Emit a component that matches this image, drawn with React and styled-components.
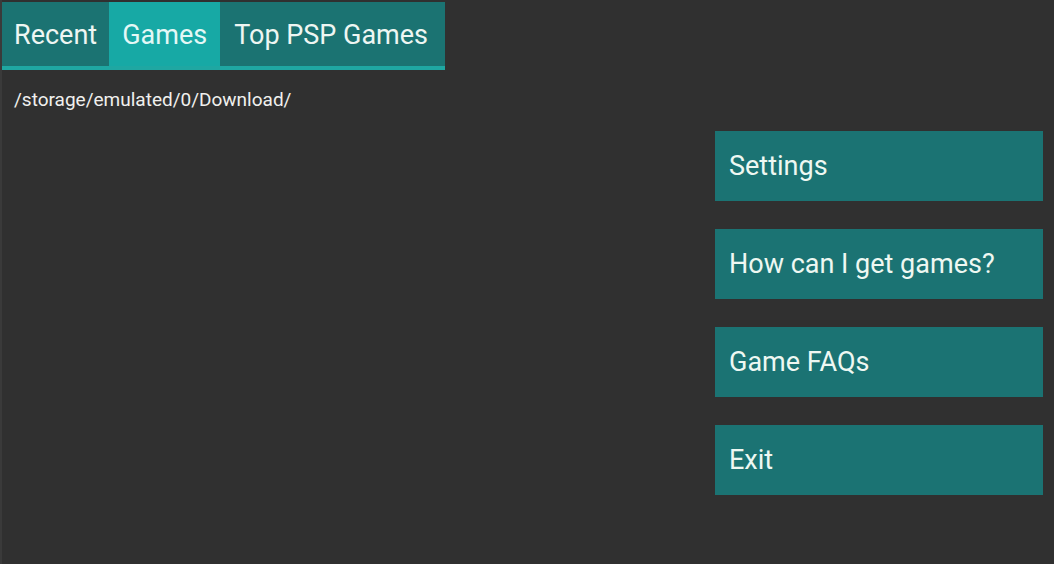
import React from 'react';
import styled, { createGlobalStyle } from 'styled-components';

const GlobalStyle = createGlobalStyle`
  html, body {
    margin: 0;
    padding: 0;
    background: #303030;
  }
  * { box-sizing: border-box; }
`;

const Screen = styled.div`
  width: 1054px;
  height: 564px;
  background: #303030;
  border-left: 2px solid #3a3a3a;
  font-family: Roboto, "Liberation Sans", sans-serif;
  color: #eef6f2;
  display: flex;
  flex-direction: column;
  overflow: hidden;
`;

const TabBar = styled.div`
  margin-top: 2px;
  width: 443px;
  height: 68px;
  display: flex;
  background: #1b7372;
  border-bottom: 4px solid #1fa7a2;
`;

const Tab = styled.div`
  display: flex;
  align-items: center;
  padding: 2px ${(p) => p.pad || 12}px 0;
  font-size: 27px;
  background: ${(p) => (p.active ? '#17a9a5' : 'transparent')};
  color: ${(p) => (p.active ? '#e4f8f6' : '#eef6f2')};
`;

const Body = styled.div`
  flex: 1;
  display: flex;
  justify-content: space-between;
`;

const PathText = styled.div`
  padding: 18px 0 0 12px;
  font-size: 19px;
  color: #f0f0ee;
`;

const Menu = styled.div`
  width: 328px;
  margin-right: 11px;
  padding-top: 61px;
  display: flex;
  flex-direction: column;
  gap: 28px;
`;

const MenuButton = styled.div`
  height: 70px;
  background: #1b7373;
  display: flex;
  align-items: center;
  padding-left: 14px;
  font-size: 27px;
  color: #eef8f2;
`;

export default function App() {
  return (
    <>
      <GlobalStyle />
      <Screen>
        <TabBar>
          <Tab pad={12}>Recent</Tab>
          <Tab pad={13} active>Games</Tab>
          <Tab pad={14}>Top PSP Games</Tab>
        </TabBar>
        <Body>
          <PathText>/storage/emulated/0/Download/</PathText>
          <Menu>
            <MenuButton>Settings</MenuButton>
            <MenuButton>How can I get games?</MenuButton>
            <MenuButton>Game FAQs</MenuButton>
            <MenuButton>Exit</MenuButton>
          </Menu>
        </Body>
      </Screen>
    </>
  );
}
